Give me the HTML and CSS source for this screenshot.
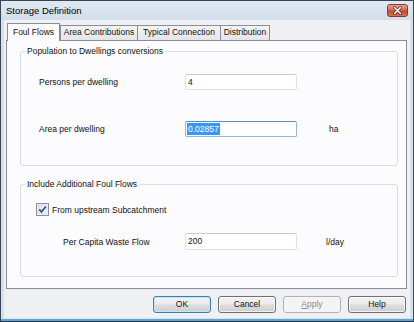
FILE: index.html
```html
<!DOCTYPE html>
<html>
<head>
<meta charset="utf-8">
<link rel="stylesheet" href="styles.css">
</head>
<body>
<div class="window">
  <div class="titlebar">
    <span class="title">Storage Definition</span>
    <span class="close">
      <svg width="21" height="13" viewBox="0 0 21 13">
        <defs>
          <linearGradient id="cg" x1="0" y1="0" x2="0" y2="1">
            <stop offset="0" stop-color="#e9a899"/>
            <stop offset="0.45" stop-color="#d56d56"/>
            <stop offset="0.55" stop-color="#c24a30"/>
            <stop offset="1" stop-color="#d7765a"/>
          </linearGradient>
        </defs>
        <rect x="0.5" y="0.5" width="20" height="12" rx="2.5" fill="url(#cg)" stroke="#8a3a2c"/>
        <path d="M7.5 3.5 L13.5 9.5 M13.5 3.5 L7.5 9.5" stroke="#5a2418" stroke-width="3" stroke-linecap="round"/>
        <path d="M7.5 3.5 L13.5 9.5 M13.5 3.5 L7.5 9.5" stroke="#ffffff" stroke-width="1.6" stroke-linecap="round"/>
      </svg>
    </span>
  </div>
  <div class="client">
    <div class="tabs">
      <div class="tab active tab-foul">Foul Flows</div>
      <div class="tab tab-area">Area Contributions</div>
      <div class="tab tab-typ">Typical Connection</div>
      <div class="tab tab-dist">Distribution</div>
    </div>
    <div class="panel">
      <fieldset class="group g1">
        <legend>Population to Dwellings conversions</legend>
        <div class="row r1">
          <span class="label">Persons per dwelling</span>
          <span class="input">4</span>
        </div>
        <div class="row r2">
          <span class="label">Area per dwelling</span>
          <span class="input focus"><span class="sel">0.02857</span></span>
          <span class="unit unit-ha">ha</span>
        </div>
      </fieldset>
      <fieldset class="group g2">
        <legend>Include Additional Foul Flows</legend>
        <div class="check-row">
          <span class="checkbox">
            <svg width="13" height="13" viewBox="0 0 13 13">
              <defs>
                <linearGradient id="kg" x1="0" y1="0" x2="1" y2="1">
                  <stop offset="0" stop-color="#dde6f0"/>
                  <stop offset="1" stop-color="#f6f8fb"/>
                </linearGradient>
              </defs>
              <rect x="0.5" y="0.5" width="12" height="12" fill="#ffffff" stroke="#8f8f8f"/>
              <rect x="2" y="2" width="9" height="9" fill="url(#kg)" stroke="#b9c6d6" stroke-width="0.6"/>
              <path d="M3.2 6.4 L5.4 8.8 L9.8 3.6" fill="none" stroke="#3f5594" stroke-width="1.8"/>
            </svg>
          </span>
          <span class="check-label">From upstream Subcatchment</span>
        </div>
        <div class="row r3">
          <span class="label label-indent">Per Capita Waste Flow</span>
          <span class="input tall">200</span>
          <span class="unit unit-day">l/day</span>
        </div>
      </fieldset>
    </div>
    <div class="buttons">
      <div class="btn default">OK</div>
      <div class="btn">Cancel</div>
      <div class="btn disabled"><span class="accel">A</span>pply</div>
      <div class="btn">Help</div>
    </div>
  </div>
</div>
</body>
</html>
```
FILE: styles.css
```css
* { box-sizing: border-box; }
html, body { margin: 0; padding: 0; background: #ffffff; }
body {
  font-family: "Liberation Sans", Arial, sans-serif;
  font-size: 8.5px;
  color: #111;
}
.window {
  width: 414px;
  height: 322px;
  border: 1px solid #3b4653;
  border-bottom-color: #26313d;
  background: #d7e1ec;
  display: flex;
  flex-direction: column;
  padding: 0 3px 3px 3px;
  box-shadow: inset 0 -2px 0 #58a9d6;
}
.titlebar {
  height: 19px;
  margin: 0 -3px;
  display: flex;
  align-items: flex-start;
  justify-content: space-between;
  background: linear-gradient(#dfe8f2, #d3deea);
}
.title {
  font-size: 9.5px;
  line-height: 12px;
  margin-top: 4px;
  margin-left: 5px;
  color: #000;
}
.close {
  width: 21px;
  height: 13px;
  margin-top: 3px;
  margin-right: 5px;
  display: block;
}
.close svg { display: block; }
.client {
  flex: 1;
  background: #eef0f3;
  padding: 3px 3px 0 2px;
  display: flex;
  flex-direction: column;
}
.tabs {
  height: 17px;
  display: flex;
  align-items: flex-end;
  padding-left: 1px;
}
.tab {
  height: 15px;
  line-height: 13px;
  text-align: center;
  border: 1px solid #898c95;
  border-bottom: none;
  background: linear-gradient(#f4f4f4, #e4e5e7);
  margin-right: -1px;
  white-space: nowrap;
}
.tab.active {
  height: 18px;
  line-height: 17px;
  background: #fcfcfe;
  margin-bottom: -1px;
  position: relative;
  z-index: 2;
  margin-right: 0;
}
.tab-foul { width: 53px; }
.tab-area { width: 78px; }
.tab-typ { width: 84px; }
.tab-dist { width: 50px; }
.panel {
  width: 401px;
  height: 249px;
  border: 1px solid #898c95;
  background: #fcfcfe;
  padding: 5px 8px 0 13px;
  position: relative;
  z-index: 1;
}
.group {
  margin: 0;
  padding: 0;
  width: 378px;
  border: 1px solid #d5dfe5;
  border-radius: 3px;
  min-width: 0;
}
.group legend {
  padding: 0 2px;
  margin-left: 4px;
  line-height: 10px;
  font-size: 8.5px;
}
.g1 { padding-bottom: 28px; }
.g2 { margin-top: 13px; padding-bottom: 26px; }
.row {
  display: flex;
  align-items: center;
  padding-left: 18px;
}
.r1 { margin-top: 18px; height: 16px; }
.r2 { margin-top: 31px; height: 16px; }
.r3 { margin-top: 17px; height: 17px; }
.label {
  width: 146px;
  flex: none;
}
.label-indent {
  margin-left: 24px;
  width: 122px;
}
.input {
  width: 112px;
  height: 16px;
  flex: none;
  border: 1px solid #dde1e8;
  border-top-color: #c5c9d0;
  border-radius: 2px;
  background: #ffffff;
  line-height: 14px;
  padding-left: 2px;
}
.input.tall { height: 17px; line-height: 15px; }
.input.focus {
  border-color: #8fb9de;
  border-top-color: #5d8fbd;
  padding-left: 1px;
  display: flex;
  align-items: center;
}
.sel {
  background: #3399ff;
  color: #ffffff;
  line-height: 12px;
  padding: 0 1px;
}
.unit-ha { margin-left: 32px; }
.unit-day { margin-left: 29px; }
.check-row {
  margin-top: 14px;
  height: 13px;
  display: flex;
  align-items: center;
  padding-left: 15px;
}
.checkbox { width: 13px; height: 13px; display: block; flex: none; }
.checkbox svg { display: block; }
.check-label { margin-left: 3px; }
.buttons {
  display: flex;
  justify-content: flex-end;
  gap: 7px;
  margin-top: 7px;
  padding-right: 1px;
}
.btn {
  width: 58px;
  height: 17px;
  border: 1px solid #707070;
  border-radius: 3px;
  background: linear-gradient(#f3f3f3 0%, #ebebeb 48%, #dddddd 52%, #cfcfcf 100%);
  text-align: center;
  line-height: 15px;
  box-shadow: inset 0 0 0 1px rgba(255,255,255,0.7);
}
.btn.default {
  border-color: #3c7fb1;
  box-shadow: inset 0 0 0 1px #c4e5f6;
}
.btn.disabled {
  border-color: #adb2b5;
  background: #f4f4f4;
  color: #8b8b8b;
  box-shadow: none;
}
.accel { text-decoration: underline; }
```
